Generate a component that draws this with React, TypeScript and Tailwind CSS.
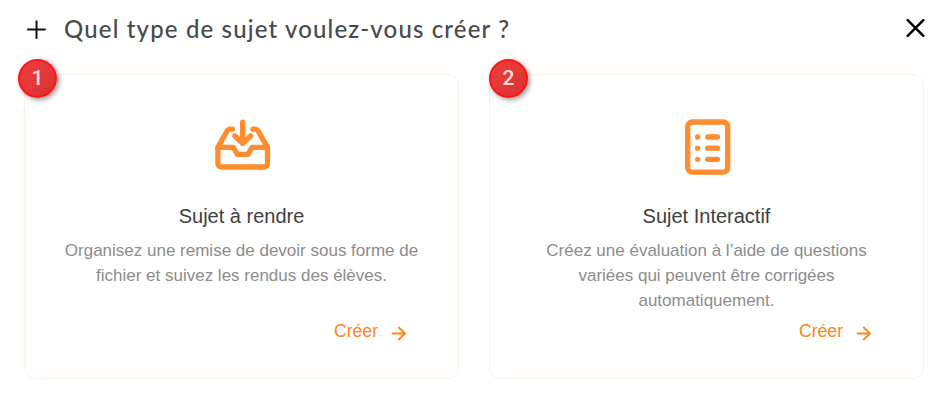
import React from "react";

function TrayIcon() {
  return (
    <svg className="ml-[2px]" width="56" height="56" viewBox="0 0 56 56" fill="none" stroke="#ff8c2e" strokeWidth="5.3" strokeLinecap="round" strokeLinejoin="round">
      <path d="M27.7 3.2V24.2M19.9 17L27.7 24.3L35.5 17" />
      <path d="M17.5 10.1H15.7C14.1 10.1 12.7 11 12 12.4L2.9 28.3V44.4C2.9 46.5 4.5 48 6.6 48H48.8C50.9 48 52.5 46.5 52.5 44.4V28.3L43.4 12.4C42.7 11 41.3 10.1 39.7 10.1H37.9" />
      <path d="M2.9 28.3H18.4L22.4 35.4H33L37 28.3H52.5" />
    </svg>
  );
}

function ListIcon() {
  return (
    <svg className="ml-[2px]" width="56" height="56" viewBox="0 0 56 56" fill="none" stroke="#ff8c2e" strokeWidth="5.3" strokeLinecap="round">
      <rect x="7.7" y="3" width="40" height="50.2" rx="4.5" />
      <path d="M17.6 18h.01M17.6 29.2h.01M17.6 40.3h.01M27.7 18H37.5M27.7 29.2H37.5M27.7 40.3H37.5" />
    </svg>
  );
}

function Card(props: { badge: string; badgeClass: string; icon: React.ReactNode; title: string; lines: string[] }) {
  return (
    <section className="relative flex h-[305px] w-[435px] flex-col items-center rounded-[11px] border border-[#fff0e6] pt-[44px]">
      <span className={`absolute -top-[16px] flex h-[39px] w-[39px] items-center justify-center rounded-full border-2 border-[#ff1515] bg-linear-to-br from-[#ee4040] to-[#dc3030] font-['Roboto',sans-serif] text-[21px] font-medium leading-none text-[#ffdede] shadow-[2px_2px_5px_rgba(0,0,0,0.4)] ${props.badgeClass}`}>
        {props.badge}
      </span>
      {props.icon}
      <h2 className="mt-[25px] text-[20px] leading-[32px] text-[#404040]">{props.title}</h2>
      <p className="mt-[6px] h-[75px] text-center text-[17px] leading-[25px] text-[#8c8c8c]">
        {props.lines.map((line) => (
          <span key={line} className="block whitespace-nowrap">{line}</span>
        ))}
      </p>
      <button className="mr-[52px] mt-[5px] flex items-center self-end text-[17.6px] leading-[26px] text-[#ff8520]">
        Créer
        <svg className="ml-[13px] mt-[4px]" width="15" height="16" viewBox="0 0 15 16" fill="none" stroke="currentColor" strokeWidth="1.8" strokeLinecap="round" strokeLinejoin="round">
          <path d="M1.5 8.5H14M7.8 2.5L14 8.5L7.8 14.5" />
        </svg>
      </button>
    </section>
  );
}

export default function App() {
  return (
    <main className="h-[403px] w-[950px] overflow-hidden bg-white px-[24px] pt-[10px] font-['Liberation_Sans',Arial,sans-serif]">
      <header className="flex h-[40px] items-center">
        <svg className="ml-[2px]" width="20" height="20" viewBox="0 0 20 20" stroke="#111" strokeWidth="2" strokeLinecap="round">
          <path d="M10.5 1.2V18M2 9.6H19" />
        </svg>
        <h1 className="mb-[2px] ml-[18px] whitespace-nowrap font-['Lato',sans-serif] text-[24px] font-medium leading-[38px] tracking-[1.15px] text-[#4a4a4a]">
          Quel type de sujet voulez-vous créer ?
        </h1>
        <svg className="mb-[5px] ml-auto mr-px" width="20" height="20" viewBox="0 0 20 20" stroke="#000" strokeWidth="2.5" strokeLinecap="round">
          <path d="M2.7 2.2L18.3 17.8M18.3 2.2L2.7 17.8" />
        </svg>
      </header>
      <div className="mt-[24px] flex gap-[30px]">
        <Card badge="1" badgeClass="-left-[7px]" icon={<TrayIcon />} title="Sujet à rendre" lines={["Organisez une remise de devoir sous forme de", "fichier et suivez les rendus des élèves."]} />
        <Card badge="2" badgeClass="-left-[1px]" icon={<ListIcon />} title="Sujet Interactif" lines={["Créez une évaluation à l’aide de questions", "variées qui peuvent être corrigées", "automatiquement."]} />
      </div>
    </main>
  );
}
